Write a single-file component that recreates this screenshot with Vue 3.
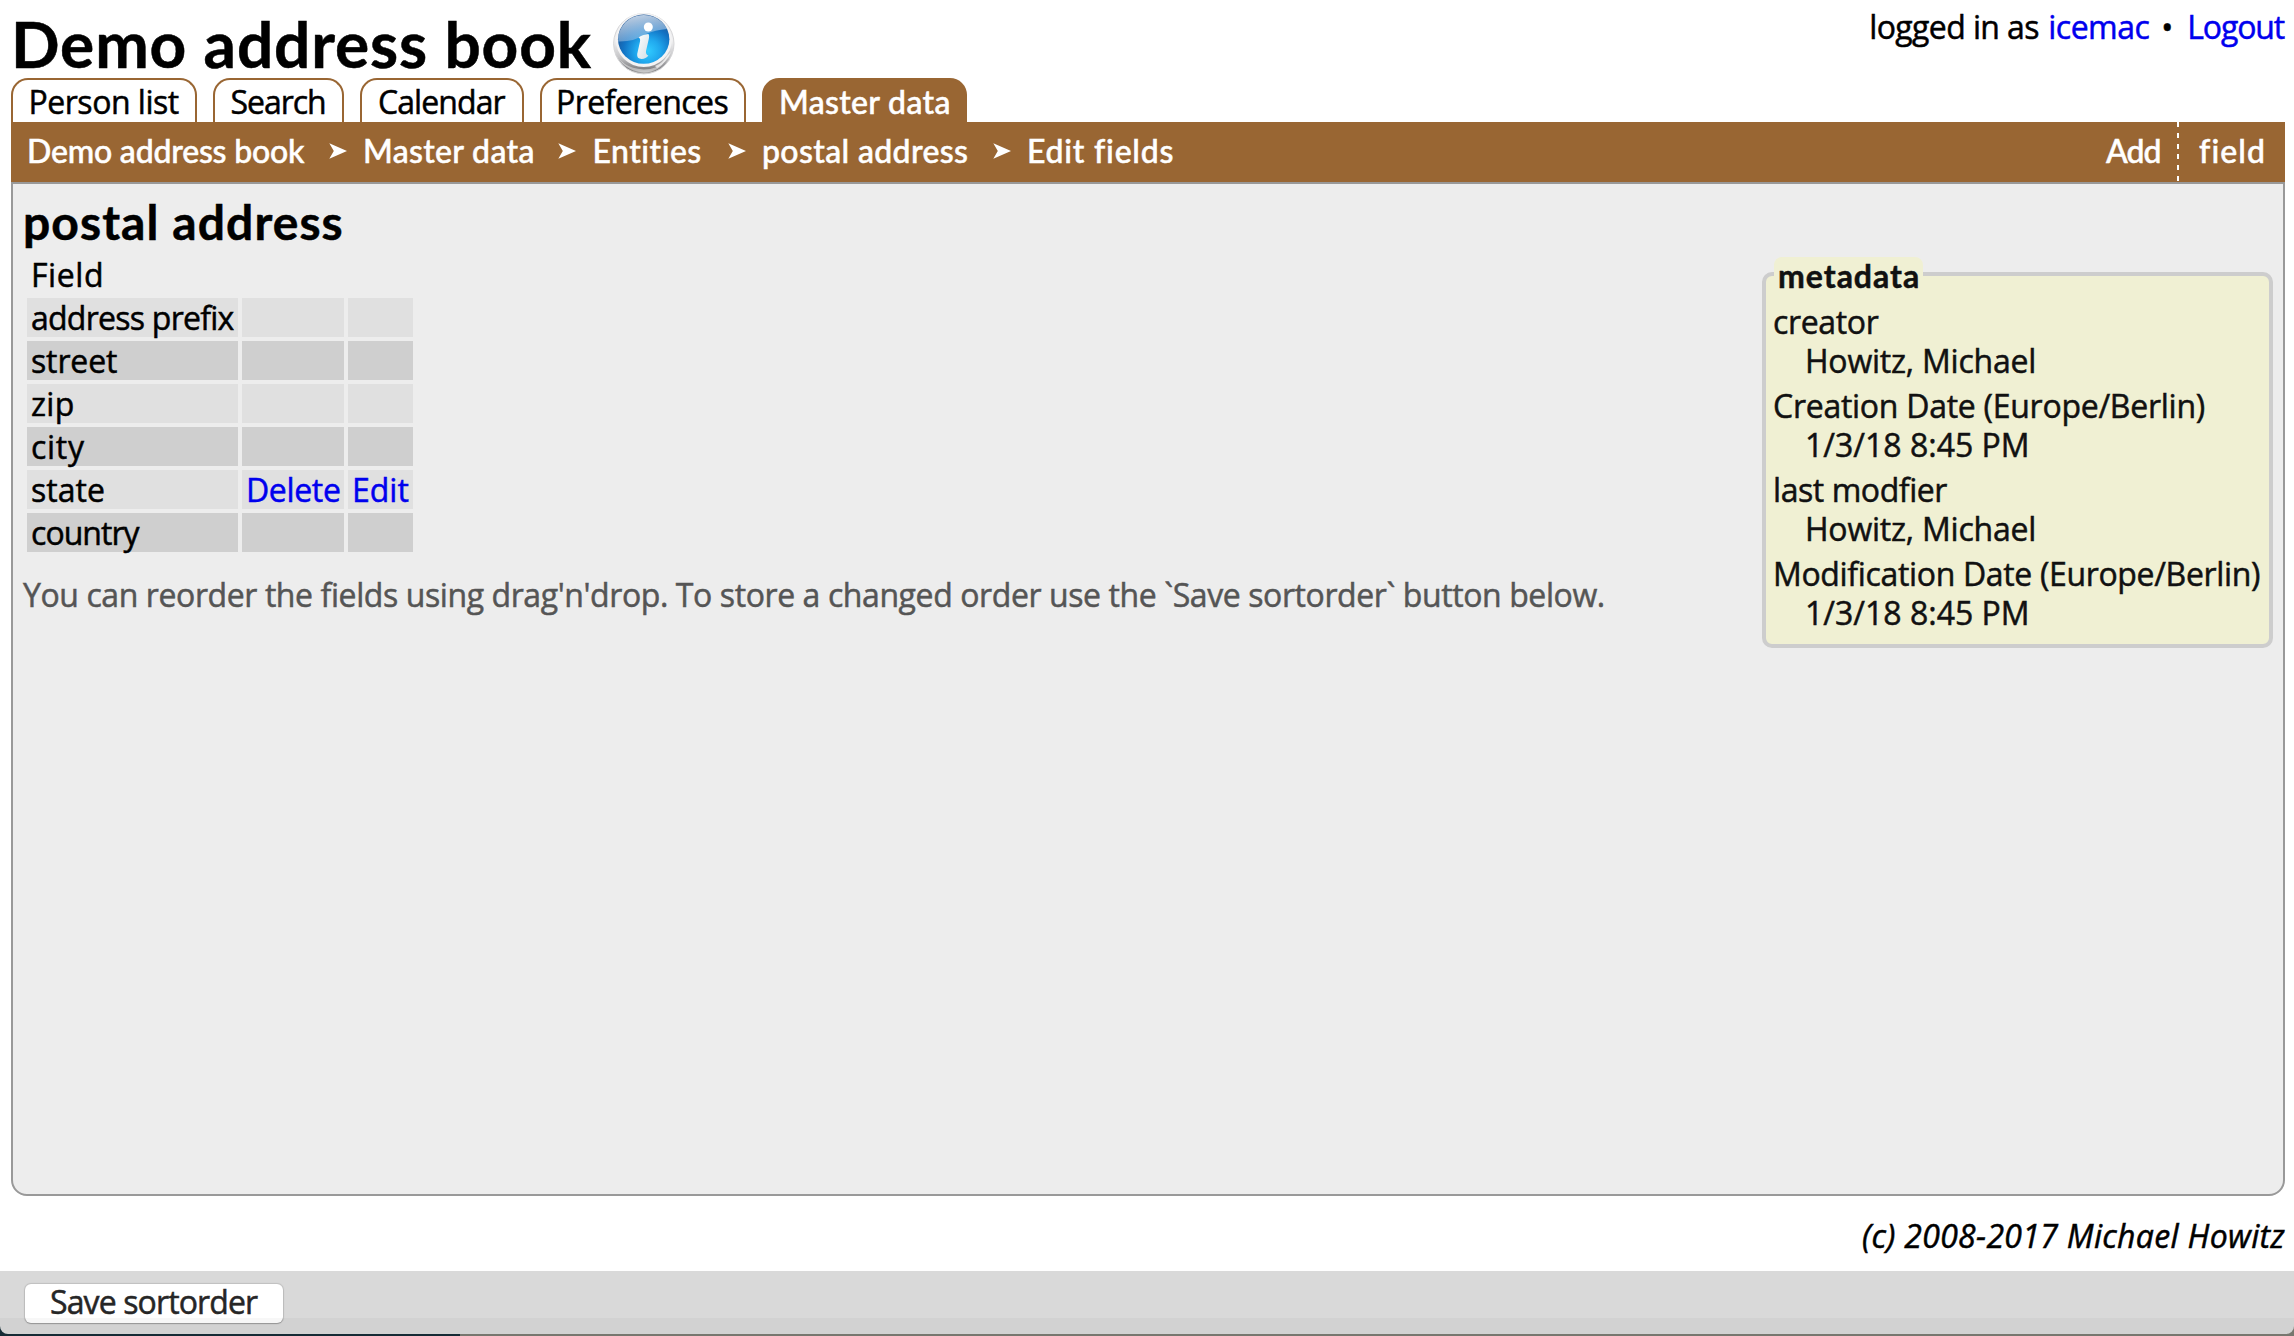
<script setup>
const tabs = [
  { label: 'Person list', width: 186, pad: 15.5, spacing: -0.48 },
  { label: 'Search', width: 131, pad: 15.5, spacing: -1.04 },
  { label: 'Calendar', width: 164, pad: 16, spacing: -0.92 },
  { label: 'Preferences', width: 206, pad: 14, spacing: -0.55 },
  { label: 'Master data', width: 205, pad: 15, spacing: 0.32, active: true },
]

const crumbs = [
  { label: 'Demo address book', width: 303.5, spacing: -0.19 },
  { label: 'Master data', width: 197, spacing: 0.32 },
  { label: 'Entities', width: 137, spacing: 0.49 },
  { label: 'postal address', width: 232.5, spacing: 0.36 },
  { label: 'Edit fields', width: 160, spacing: 0.76 },
]

const fields = [
  { name: 'address prefix', spacing: -0.75 },
  { name: 'street', spacing: -0.13 },
  { name: 'zip', spacing: 0.31 },
  { name: 'city', spacing: 0.73 },
  { name: 'state', spacing: 0.04, editable: true },
  { name: 'country', spacing: -0.95 },
]

const metadata = [
  { term: 'creator', termSpacing: -0.35, value: 'Howitz, Michael', valueSpacing: -0.22 },
  { term: 'Creation Date (Europe/Berlin)', termSpacing: -0.27, value: '1/3/18 8:45 PM', valueSpacing: 0 },
  { term: 'last modfier', termSpacing: -0.43, value: 'Howitz, Michael', valueSpacing: -0.22 },
  { term: 'Modification Date (Europe/Berlin)', termSpacing: -0.34, value: '1/3/18 8:45 PM', valueSpacing: 0 },
]

const ls = (n) => ({ letterSpacing: n + 'px' })
</script>

<template>
  <div class="page">
    <header class="header">
      <h1 class="title">Demo address book</h1>
      <svg class="info" viewBox="0 0 66 66" width="66" height="66">
        <defs>
          <linearGradient id="ring" x1="0" y1="0" x2="0" y2="1">
            <stop offset="0" stop-color="#e4e4e5" />
            <stop offset="0.45" stop-color="#f0f0f1" />
            <stop offset="0.72" stop-color="#c6c6c8" />
            <stop offset="0.92" stop-color="#7f7f82" />
            <stop offset="1" stop-color="#b4b4b4" />
          </linearGradient>
          <radialGradient id="ball" cx="0.58" cy="0.74" r="0.68">
            <stop offset="0" stop-color="#30cbff" />
            <stop offset="0.35" stop-color="#20a8ee" />
            <stop offset="0.7" stop-color="#1273c4" />
            <stop offset="1" stop-color="#1c5596" />
          </radialGradient>
          <linearGradient id="gloss" x1="0" y1="0" x2="0.35" y2="1">
            <stop offset="0" stop-color="#f0f4fa" stop-opacity="0.85" />
            <stop offset="1" stop-color="#8fb9e0" stop-opacity="0.55" />
          </linearGradient>
          <linearGradient id="stem" x1="0" y1="0" x2="1" y2="1">
            <stop offset="0" stop-color="#ffffff" />
            <stop offset="1" stop-color="#cfdfe6" />
          </linearGradient>
        </defs>
        <circle cx="33.8" cy="33.7" r="30.2" fill="url(#ring)" stroke="#d6d6d8" stroke-width="1" />
        <path d="M5 40 Q10 58 33.8 59.5 Q50 59 56 49 Q50 62 33.8 62.5 Q12 61 5 40Z" fill="#fff" opacity="0.45" />
        <path d="M47 58 Q57 52 61 42 L57 46 Q53 53 45 56Z" fill="#fff" opacity="0.7" />
        <ellipse cx="33.8" cy="30" rx="28" ry="27" fill="#f3f3f4" />
        <ellipse cx="33.7" cy="29.2" rx="25.7" ry="24.6" fill="url(#ball)" />
        <path d="M8.2 31.5 A25.7 24.6 0 0 1 57 19 Q45 20 36 24 Q24 32 8.2 31.5Z" fill="url(#gloss)" />
        <circle cx="38.3" cy="17" r="4.5" fill="#fff" />
        <path d="M28.6 27.6 Q32 24.8 38.4 24 Q39.6 25 38.8 29 L36 41 Q35.6 45 38.4 45.4 Q36 48.8 31.6 49 Q26.6 48.8 27.2 44 L30 31.5 Q30.6 28.4 28.6 27.6Z" fill="url(#stem)" />
      </svg>
      <div class="login">
        <span class="who">logged in as</span>
        <a class="user">icemac</a>
        <span class="dot">•</span>
        <a class="logout">Logout</a>
      </div>
    </header>

    <nav class="tabs">
      <a
        v-for="tab in tabs"
        :key="tab.label"
        class="tab"
        :class="{ active: tab.active }"
        :style="{ width: tab.width + 'px', paddingLeft: tab.pad + 'px', letterSpacing: tab.spacing + 'px' }"
      >{{ tab.label }}</a>
    </nav>

    <div class="bar">
      <template v-for="(crumb, i) in crumbs" :key="crumb.label">
        <svg v-if="i" class="arrow" viewBox="0 0 18 16" width="18" height="16">
          <path d="M0.3 0.2 L18 8 L0.3 15.8 L4.8 8Z" fill="#fff" />
        </svg>
        <a class="crumb" :style="{ width: crumb.width + 'px', letterSpacing: crumb.spacing + 'px' }">{{ crumb.label }}</a>
      </template>
      <span class="add">Add</span>
      <a class="add-field">field</a>
    </div>

    <main class="panel">
      <section class="content">
        <h2 class="heading">postal address</h2>
        <div class="table">
          <div class="row head"><span class="cell name" :style="ls(0.6)">Field</span></div>
          <div v-for="field in fields" :key="field.name" class="row">
            <span class="cell name" :style="ls(field.spacing)">{{ field.name }}</span>
            <span class="cell remove"><a v-if="field.editable">Delete</a></span>
            <span class="cell edit"><a v-if="field.editable">Edit</a></span>
          </div>
        </div>
        <p class="hint">You can reorder the fields using drag'n'drop. To store a changed order use the `Save sortorder` button below.</p>
      </section>

      <aside class="meta">
        <div class="legend">metadata</div>
        <dl class="list">
          <div v-for="item in metadata" :key="item.term" class="entry">
            <dt :style="ls(item.termSpacing)">{{ item.term }}</dt>
            <dd :style="ls(item.valueSpacing)">{{ item.value }}</dd>
          </div>
        </dl>
      </aside>
    </main>

    <footer class="copyright">(c) 2008-2017 Michael Howitz</footer>

    <div class="desk">
      <div class="actions">
        <button class="save" type="button">Save sortorder</button>
        <div class="shade"></div>
      </div>
    </div>
  </div>
</template>

<style>
body {
  margin: 0;
  background: #fff;
}
</style>

<style scoped>
* {
  box-sizing: border-box;
}
.page {
  width: 2294px;
  height: 1336px;
  overflow: hidden;
  display: flex;
  flex-direction: column;
  font-family: 'Open Sans', 'Noto Sans', sans-serif;
  font-size: 32px;
  color: #000;
  white-space: nowrap;
  -webkit-text-stroke: 0.5px currentColor;
}
a {
  color: #0000ee;
  text-decoration: none;
}
.header {
  height: 78px;
  flex: none;
  display: flex;
  align-items: flex-start;
  padding: 9px 8px 0 11px;
}
.title {
  margin: 0;
  width: 599px;
  font-family: Lato, sans-serif;
  font-size: 64px;
  font-weight: 700;
  line-height: 70px;
  letter-spacing: 0.85px;
}
.info {
  margin-top: 1px;
  flex: none;
}
.login {
  margin-left: auto;
  margin-top: -7px;
  display: flex;
  line-height: 50px;
}
.who {
  width: 179px;
  letter-spacing: -0.61px;
}
.user {
  width: 113px;
  letter-spacing: -0.5px;
}
.dot {
  width: 26px;
}
.logout {
  letter-spacing: -1.14px;
  margin-right: 2px;
}
.tabs {
  height: 44px;
  flex: none;
  display: flex;
  gap: 16px;
  padding-left: 11px;
}
.tab {
  border: 2px solid #996633;
  border-bottom: 0;
  border-radius: 17px 17px 0 0;
  line-height: 44px;
  color: #000;
}
.tab.active {
  background: #996633;
  color: #fff;
  font-family: Lato, sans-serif;
  font-weight: 500;
}
.bar {
  height: 60px;
  flex: none;
  margin: 0 9px 0 11px;
  padding-left: 16px;
  display: flex;
  background: #996633;
  color: #fff;
  font-family: Lato, sans-serif;
  font-weight: 500;
  line-height: 58px;
}
.bar a {
  color: #fff;
}
.arrow {
  margin: 21px 16.5px 0 -2px;
  flex: none;
}
.crumb {
  flex: none;
}
.arrow + .crumb {
  margin-right: 0;
}
.add {
  margin-left: auto;
  width: 73px;
  letter-spacing: -1.02px;
  background: repeating-linear-gradient(#fff 0 5px, transparent 5px 10.8px) right top / 2px 100% no-repeat;
}
.add-field {
  width: 106px;
  padding-left: 20px;
  letter-spacing: 1.1px;
}
.panel {
  height: 1014px;
  flex: none;
  margin: 0 9px 0 11px;
  display: flex;
  justify-content: space-between;
  align-items: flex-start;
  background: #ededed;
  border: 2px solid #999;
  border-radius: 0 0 16px 16px;
}
.content {
  padding: 8px 0 0 10px;
}
.heading {
  margin: 0 0 4px;
  font-family: Lato, sans-serif;
  font-size: 48px;
  font-weight: 700;
  line-height: 59px;
  letter-spacing: 1.08px;
}
.table {
  display: flex;
  flex-direction: column;
  gap: 4px;
  margin-left: 4px;
}
.row {
  display: flex;
  gap: 4px;
}
.cell {
  height: 39px;
  line-height: 39px;
  padding-left: 4px;
  background: #e0e0e0;
}
.row:nth-child(odd) .cell {
  background: #cfcfcf;
}
.row.head .cell {
  background: none;
}
.name {
  width: 211px;
}
.remove {
  width: 102px;
  letter-spacing: -0.35px;
}
.edit {
  width: 65px;
  letter-spacing: 0;
}
.hint {
  margin: 23px 0 0;
  line-height: 40px;
  letter-spacing: -0.41px;
  color: #555;
}
.meta {
  width: 511px;
  height: 376px;
  flex: none;
  margin: 88px 10px 0 0;
  border: 4px solid #cdcdcd;
  border-radius: 10px;
  background: #f0f0d3;
  padding-left: 8px;
  color: #111;
}
.legend {
  width: 149px;
  height: 38px;
  margin-top: -19px;
  padding-left: 4px;
  border-radius: 8px 8px 0 0;
  background: #f0f0d3;
  font-family: Lato, sans-serif;
  font-weight: 700;
  line-height: 37px;
  letter-spacing: 1px;
}
.list {
  margin: 7px 0 0;
  display: flex;
  flex-direction: column;
  gap: 6px;
}
dt,
dd {
  margin: 0;
  line-height: 39px;
}
dt {
  margin-left: -1px;
}
dd {
  padding-left: 31px;
}
.copyright {
  height: 75px;
  flex: none;
  padding-right: 9px;
  text-align: right;
  font-style: italic;
  line-height: 79px;
  letter-spacing: 0.32px;
}
.desk {
  height: 65px;
  flex: none;
  background: linear-gradient(90deg, #152b35 460px, #77776f 460px);
}
.actions {
  position: relative;
  height: 63px;
  padding: 13px 0 0 25px;
  background: #d9d9d9;
  border-radius: 0 0 8px 8px;
  overflow: hidden;
}
.save {
  display: block;
  width: 258px;
  height: 39px;
  padding: 0 0 3px 25px;
  border: 0;
  border-radius: 6px;
  background: #fff;
  box-shadow: 0 0 1px 1px rgba(0, 0, 0, 0.12), 0 1px 1px rgba(0, 0, 0, 0.2);
  font: inherit;
  line-height: 36px;
  letter-spacing: -0.88px;
  text-align: left;
  color: #262626;
  -webkit-text-stroke: inherit;
}
.shade {
  position: absolute;
  left: 0;
  right: 0;
  bottom: 0;
  height: 16px;
  background: rgba(0, 0, 0, 0.03);
}
</style>
